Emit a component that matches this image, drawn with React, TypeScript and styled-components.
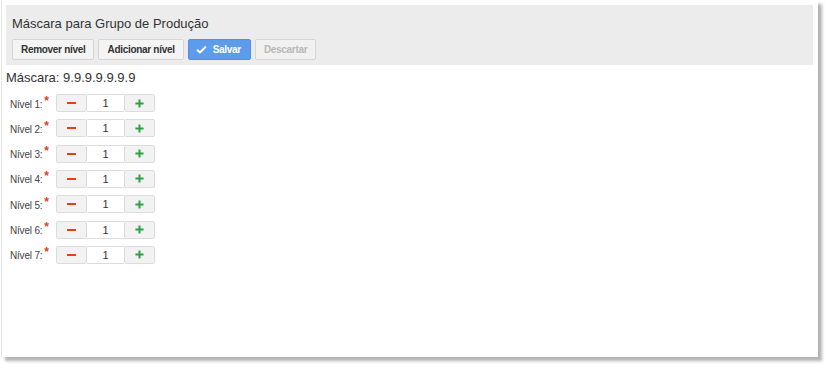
import styled, { createGlobalStyle } from "styled-components";

const GlobalStyle = createGlobalStyle`
  html, body {
    margin: 0;
    padding: 0;
    background: #fff;
    font-family: "Liberation Sans", Arial, sans-serif;
    color: #333;
  }
`;

const levels = [1, 1, 1, 1, 1, 1, 1];

export default function App() {
  return (
    <>
      <GlobalStyle />
      <Page>
        <Panel>
          <Header>
            <Title>Máscara para Grupo de Produção</Title>
            <Toolbar>
              <ToolButton>Remover nível</ToolButton>
              <ToolButton>Adicionar nível</ToolButton>
              <ToolButton variant="primary">
                <CheckIcon viewBox="0 0 12 10">
                  <path d="M1 5.2 L4.3 8.3 L11 1.6" fill="none" stroke="#fff" strokeWidth="2.2" />
                </CheckIcon>
                Salvar
              </ToolButton>
              <ToolButton variant="disabled">Descartar</ToolButton>
            </Toolbar>
          </Header>
          <MaskText>Máscara: {levels.map(() => "9").join(".")}</MaskText>
          <LevelList>
            {levels.map((value, i) => (
              <LevelRow key={i}>
                <LevelLabel>
                  Nível {i + 1}:<Required>*</Required>
                </LevelLabel>
                <Spinner>
                  <StepButton>
                    <Minus />
                  </StepButton>
                  <ValueBox>{value}</ValueBox>
                  <StepButton>
                    <PlusIcon viewBox="0 0 10 10">
                      <path d="M5 0.5 V9.5 M0.5 5 H9.5" stroke="#2ea043" strokeWidth="2.2" />
                    </PlusIcon>
                  </StepButton>
                </Spinner>
              </LevelRow>
            ))}
          </LevelList>
        </Panel>
      </Page>
    </>
  );
}

const Page = styled.div`
  width: 828px;
  height: 369px;
  padding: 0 0 0 1px;
  box-sizing: border-box;
`;

const Panel = styled.div`
  width: 817px;
  height: 357px;
  box-sizing: border-box;
  background: #fff;
  border-left: 1px solid #e6e6e6;
  padding: 5px 5px 0 4px;
  box-shadow: 4px 4px 3px rgba(0, 0, 0, 0.3);
`;

const Header = styled.div`
  background: #ececec;
  height: 60px;
  box-sizing: border-box;
  padding: 11px 6px 0 6px;
`;

const Title = styled.div`
  font-size: 13px;
  line-height: 15px;
  color: #333;
`;

const Toolbar = styled.div`
  display: flex;
  gap: 4px;
  margin-top: 8px;
`;

const ToolButton = styled.div<{ variant?: "primary" | "disabled" }>`
  height: 21px;
  box-sizing: border-box;
  display: flex;
  align-items: center;
  gap: 6px;
  font-size: 10px;
  letter-spacing: -0.3px;
  font-weight: bold;
  border-radius: 2px;
  border: 1px solid
    ${(p) => (p.variant === "primary" ? "#4f8ff0" : "#d6d6d6")};
  background: ${(p) =>
    p.variant === "primary"
      ? "#5d9cec"
      : p.variant === "disabled"
      ? "#f1f1f1"
      : "#f4f4f4"};
  color: ${(p) =>
    p.variant === "primary" ? "#fff" : p.variant === "disabled" ? "#b8b8b8" : "#333"};
  padding: ${(p) => (p.variant === "primary" ? "0 9px 0 7px" : "0 8px")};
`;

const CheckIcon = styled.svg`
  width: 11px;
  height: 9px;
`;

const MaskText = styled.div`
  font-size: 13px;
  line-height: 16px;
  margin: 5px 0 0 0;
`;

const LevelList = styled.div`
  display: flex;
  flex-direction: column;
  gap: 7.33px;
  margin-top: 8px;
`;

const LevelRow = styled.div`
  display: flex;
  align-items: center;
  height: 18px;
`;

const LevelLabel = styled.div`
  width: 50px;
  box-sizing: border-box;
  padding-left: 4px;
  font-size: 10px;
  letter-spacing: -0.2px;
  color: #444;
  display: flex;
  align-items: flex-start;
  padding-top: 2px;
`;

const Required = styled.span`
  color: #e2401c;
  font-size: 12px;
  font-weight: bold;
  line-height: 8px;
  margin-left: 2px;
  margin-top: -2px;
`;

const Spinner = styled.div`
  display: flex;
  height: 18px;
`;

const StepButton = styled.div`
  width: 31px;
  height: 18px;
  box-sizing: border-box;
  background: #f2f2f2;
  border: 1px solid #dcdcdc;
  display: flex;
  align-items: center;
  justify-content: center;
  border-radius: 2px;
`;

const Minus = styled.span`
  width: 9px;
  height: 2px;
  background: #e2401c;
`;

const PlusIcon = styled.svg`
  width: 9px;
  height: 9px;
`;

const ValueBox = styled.div`
  width: 37px;
  height: 18px;
  box-sizing: border-box;
  border-top: 1px solid #dcdcdc;
  border-bottom: 1px solid #dcdcdc;
  background: #fff;
  font-size: 11px;
  display: flex;
  align-items: center;
  justify-content: center;
  color: #333;
`;
